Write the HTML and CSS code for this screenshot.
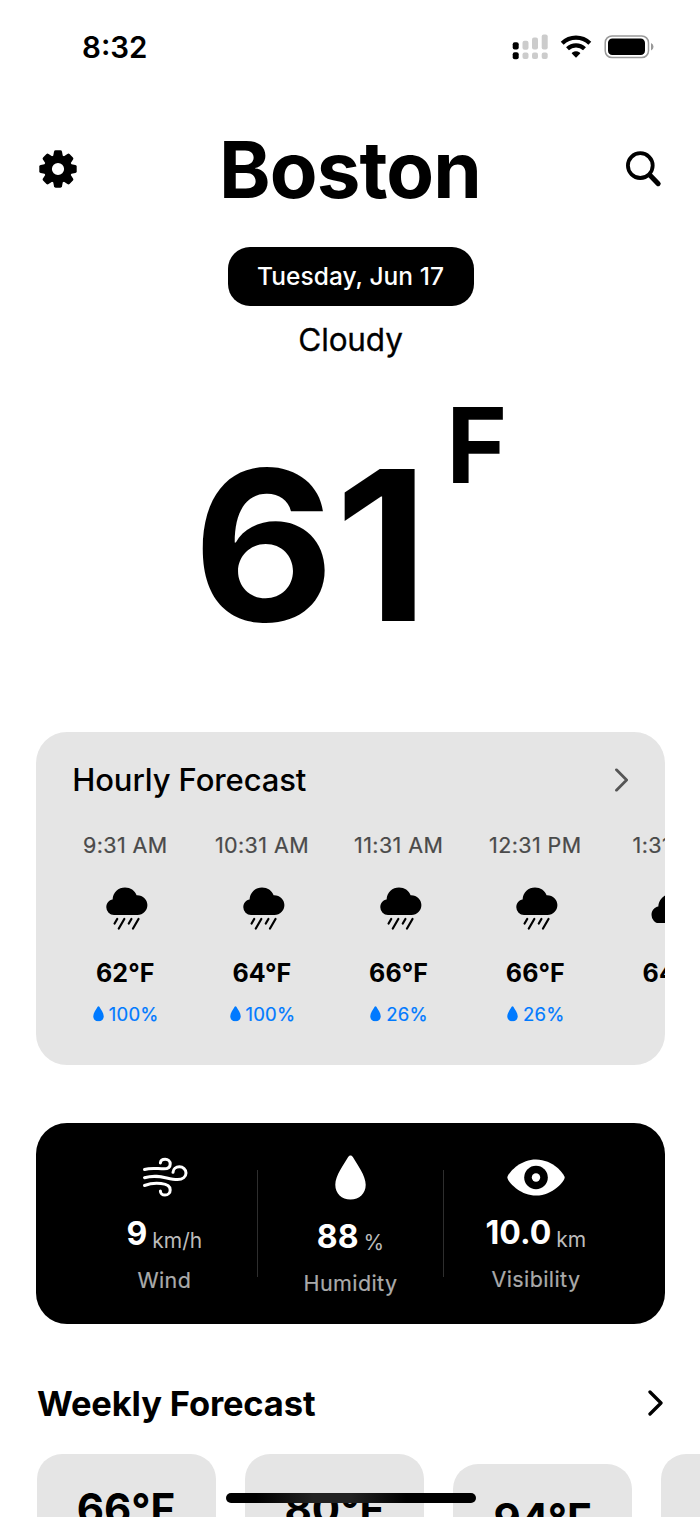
FILE: index.html
```html
<!DOCTYPE html>
<html lang="en">
<head>
<meta charset="utf-8">
<title>Weather</title>
<link rel="stylesheet" href="styles.css">
</head>
<body>
<svg class="defs" aria-hidden="true">
  <symbol id="rain" viewBox="0 0 42 43">
    <path d="M8 28A7.7 7.7 0 0 1 .3 20.300C.3 16 3.200 13 6.600 12.500C7 5.300 12.500.6 19 .6C24.500.6 28.800 3.600 30.600 8.200C36.800 7.900 41.400 12.500 41.400 18.100C41.400 23.700 37 28 31.500 28Z"/>
    <path d="M11.200 32L8.600 36.500M18.300 32L12.800 41.500M25.400 32L22.800 36.500M32.500 32L27 41.500" fill="none" stroke="currentColor" stroke-width="2.200" stroke-linecap="round"/>
  </symbol>
  <symbol id="drop" viewBox="0 0 31 45">
    <path d="M15.500.5C16.500.5 17.300 1 18 2.200C22.500 10 30.700 20.600 30.700 29.700C30.700 38.600 24.300 44.400 15.500 44.400S.3 38.600.3 29.700C.3 20.600 8.500 10 13 2.200C13.700 1 14.500.5 15.500.5Z"/>
  </symbol>
  <symbol id="chevron" viewBox="0 0 16 26">
    <path d="M2 2L13 13L2 24" fill="none" stroke="currentColor" stroke-linecap="round" stroke-linejoin="round"/>
  </symbol>
</svg>
<main class="screen">
  <div class="status">
    <span class="clock">8:32</span>
    <svg class="status-icons" viewBox="0 0 144 26">
      <g fill="#ccc">
        <rect x="12.500" y="6.700" width="6" height="9" rx="2"/><rect x="22" y="3.500" width="6" height="12" rx="2"/><rect x="31.700" y=".5" width="6" height="15" rx="2"/>
        <rect x="12.500" y="18.500" width="6" height="6.500" rx="2"/><rect x="22" y="18.500" width="6" height="6.500" rx="2"/><rect x="31.700" y="18.500" width="6" height="6.500" rx="2"/>
      </g>
      <rect x="2.700" y="8.300" width="6" height="7.200" rx="2"/><rect x="2.700" y="18.300" width="6" height="7" rx="2"/>
      <g fill="none" stroke="#000" stroke-width="4.200">
        <path d="M52.200 9.200A20 20 0 0 1 79.800 9.200"/><path d="M57.500 14.800A12.400 12.400 0 0 1 74.500 14.800"/>
      </g>
      <path d="M66 23.800L61.800 19.600Q61.600 19 62.300 18.500A6.500 6.500 0 0 1 69.700 18.500Q70.400 19 70.200 19.600Z"/>
      <rect x="95.200" y="1.900" width="43.300" height="21.700" rx="6.800" fill="none" stroke="#999" stroke-width="1.500"/>
      <rect x="98" y="4.500" width="37" height="16.500" rx="4.300"/>
      <path d="M141 9Q143.500 10 143.500 12.700T141 16.500Z" fill="#999"/>
    </svg>
  </div>

  <header class="header">
    <svg class="gear" viewBox="-19 -19 38 38">
      <circle r="10.100" fill="none" stroke="#000" stroke-width="8"/>
      <path id="tooth" d="M-5.200 -11L-4 -17.300Q-3.700 -18.700 -2.400 -18.700H2.400Q3.700 -18.700 4 -17.300L5.200 -11Z"/>
      <use href="#tooth" transform="rotate(45)"/><use href="#tooth" transform="rotate(90)"/><use href="#tooth" transform="rotate(135)"/><use href="#tooth" transform="rotate(180)"/><use href="#tooth" transform="rotate(225)"/><use href="#tooth" transform="rotate(270)"/><use href="#tooth" transform="rotate(315)"/>
    </svg>
    <h1 class="city">Boston</h1>
    <svg class="search" viewBox="0 0 38 38" fill="none" stroke="#000">
      <circle cx="15.300" cy="15.600" r="12.400" stroke-width="3.800"/>
      <path d="M25 25.200L33.200 33.700" stroke-width="5" stroke-linecap="round"/>
    </svg>
  </header>

  <div class="date">Tuesday, Jun 17</div>
  <div class="condition">Cloudy</div>
  <div class="now"><span class="degrees">61</span><span class="unit">F</span></div>

  <section class="hourly">
    <div class="hourly-head"><h2 class="hourly-title">Hourly Forecast</h2><svg class="chev-small"><use href="#chevron"/></svg></div>
    <div class="hours">
      <div class="hour"><span class="time">9:31 AM</span><svg class="rain"><use href="#rain"/></svg><b class="temp">62°F</b><span class="chance"><svg class="mini"><use href="#drop"/></svg>100%</span></div>
      <div class="hour"><span class="time">10:31 AM</span><svg class="rain"><use href="#rain"/></svg><b class="temp">64°F</b><span class="chance"><svg class="mini"><use href="#drop"/></svg>100%</span></div>
      <div class="hour"><span class="time">11:31 AM</span><svg class="rain"><use href="#rain"/></svg><b class="temp">66°F</b><span class="chance"><svg class="mini"><use href="#drop"/></svg>26%</span></div>
      <div class="hour"><span class="time">12:31 PM</span><svg class="rain"><use href="#rain"/></svg><b class="temp">66°F</b><span class="chance"><svg class="mini"><use href="#drop"/></svg>26%</span></div>
      <div class="hour"><span class="time">1:31 PM</span><svg class="rain cloud" viewBox="0 0 42 28"><use href="#rain" width="42" height="43"/></svg><b class="temp">64°F</b></div>
    </div>
  </section>

  <section class="metrics">
    <div class="metric wind">
      <svg class="metric-icon" viewBox="0 0 60 46" fill="none" stroke="#fff" stroke-width="3" stroke-linecap="round">
        <path d="M10.500 14.500C17 12.500 23 13.800 30 13.800C34.200 13.800 36.200 11.700 36.200 8.900C36.200 6.300 34 4.200 31.200 4.200C28.400 4.200 26.600 5.800 26.400 7.900"/>
        <path d="M10.500 22.700C25 18.500 33 24.500 43.500 24.500C48.700 24.500 52 21.600 52 17.900C52 14.400 49 11.800 45.400 11.800C41.800 11.800 39.200 14.200 39 17.300"/>
        <path d="M10.500 30.500C16 28.500 22 28 27 28.600C33 29.200 36.200 31.500 36.200 34.900C36.200 37.800 34 40 31 40C28.200 40 26.400 38.200 26.400 35.900"/>
      </svg>
      <div class="reading"><b>9</b><span>km/h</span></div><span class="label">Wind</span>
    </div>
    <div class="metric humidity">
      <svg class="metric-icon" viewBox="0 0 31 45" fill="#fff"><use href="#drop"/></svg>
      <div class="reading"><b>88</b><span>%</span></div><span class="label">Humidity</span>
    </div>
    <div class="metric visibility">
      <svg class="metric-icon" viewBox="0 0 58 37"><path d="M.3 18.500C.3 15.200 12 .4 29 .4S57.700 15.200 57.700 18.500S46 36.600 29 36.600S.3 21.800.3 18.500Z" fill="#fff"/><circle cx="29" cy="18.500" r="11.800"/><circle cx="29" cy="18.500" r="4.200" fill="#fff"/></svg>
      <div class="reading"><b>10.0</b><span>km</span></div><span class="label">Visibility</span>
    </div>
  </section>

  <div class="weekly-head"><h2 class="weekly-title">Weekly Forecast</h2><svg class="chev-large"><use href="#chevron"/></svg></div>
  <div class="days">
    <div class="day">66°F</div><div class="day">80°F</div><div class="day lower">94°F</div><div class="day"></div>
  </div>
  <div class="home-bar"></div>
</main>
</body>
</html>
```
FILE: styles.css
```css
* { box-sizing: border-box; }
body { margin: 0; background: #fff; color: #000; font-family: Inter, "Liberation Sans", sans-serif; }
h1, h2 { margin: 0; }
svg { display: block; flex: none; overflow: visible; }
.defs { position: absolute; width: 0; height: 0; }
.screen { position: relative; width: 700px; height: 1517px; padding-left: 1px; overflow: hidden; display: flex; flex-direction: column; align-items: center; }
.screen > * { flex: none; }

.status { width: 100%; height: 94px; padding: 0 46px 0 81px; display: flex; align-items: center; justify-content: space-between; }
.clock { font-size: 29.5px; font-weight: 600; line-height: 40px; letter-spacing: 0; }
.status-icons { width: 144px; height: 26px; }

.header { width: 100%; height: 150px; padding: 0 37px 0 38px; display: flex; align-items: center; justify-content: space-between; }
.gear { width: 38px; height: 38px; }
.city { margin: 1px 0 0 -2px; font-size: 78px; font-weight: 700; line-height: 90px; letter-spacing: -0.9px; }
.search { width: 38px; height: 38px; }

.date { width: 246px; height: 59px; margin-top: 2.500px; border-radius: 22px; background: #000; color: #fff; font-size: 24.5px; font-weight: 500; line-height: 59px; text-align: center; letter-spacing: 0.05px; }
.condition { margin-top: 14px; font-size: 31.5px; line-height: 40px; letter-spacing: -0.15px; -webkit-text-stroke: 0.3px #000; }
.now { height: 372px; padding: 35.500px 0 0 9.500px; display: flex; align-items: flex-start; }
.degrees { margin-top: 50px; font-size: 209px; font-weight: 700; line-height: 200px; transform: scaleX(1.045); transform-origin: 100% 50%; }
.unit { margin-left: 17px; font-size: 104px; font-weight: 700; line-height: 100px; }

.hourly { width: 628.5px; height: 333px; margin-top: 0; padding: 24px 0 0 36px; border-radius: 31px; background: #e5e5e5; overflow: hidden; }
.hourly-head { height: 48px; padding-right: 35px; display: flex; align-items: center; justify-content: space-between; }
.hourly-title { font-size: 31px; font-weight: 500; letter-spacing: -0.1px; }
.chev-small { width: 16px; height: 24px; color: #555; stroke-width: 3; }
.hours { display: flex; gap: 30.700px; margin-top: 24px; }
.hour { flex: 0 0 106px; display: flex; flex-direction: column; align-items: center; }
.time { color: #4a4a4a; font-size: 21.5px; line-height: 34px; white-space: nowrap; letter-spacing: 0.4px; -webkit-text-stroke: 0.2px #4a4a4a; }
.rain { width: 42px; height: 43px; margin: 25.500px 0 22px 4px; }
.cloud { width: 46px; height: 30.500px; margin: 31px 0 29px 4px; overflow: hidden; }
.temp { font-size: 25px; line-height: 42px; white-space: nowrap; letter-spacing: 0.1px; }
.chance { display: flex; align-items: center; gap: 5px; color: #007aff; font-size: 18.5px; line-height: 40px; padding-left: 1px; letter-spacing: 0.2px; -webkit-text-stroke: 0.2px #007aff; }
.mini { width: 11px; height: 15.5px; fill: currentColor; }

.metrics { width: 628.5px; height: 201.5px; margin-top: 58px; padding: 32px 35px 0; border-radius: 31px; background: #000; color: #fff; display: grid; grid-template-columns: repeat(3, 1fr); }
.metric { display: flex; flex-direction: column; align-items: center; height: 142px; }
.humidity { position: relative; }
.humidity::before, .humidity::after { content: ""; position: absolute; top: 15px; height: 107px; width: 1px; background: #2e2e2e; }
.humidity::before { left: 0; }
.humidity::after { right: 0; }
.wind .metric-icon { width: 60px; height: 46px; }
.humidity .metric-icon { width: 31px; height: 45px; }
.visibility { padding-right: 1.500px; }
.visibility .metric-icon { width: 58px; height: 37px; margin-top: 4px; }
.reading { height: 40px; display: flex; align-items: center; gap: 5px; }
.reading b { font-size: 32px; }
.reading span { color: #bbb; font-size: 21px; margin-top: 13px; }
.label { color: #aaa; font-size: 21.5px; line-height: 30px; letter-spacing: 0.4px; -webkit-text-stroke: 0.2px #aaa; }
.wind .reading { margin-top: 13px; }
.wind .label { margin-top: 11px; }
.humidity .reading { margin-top: 17px; }
.humidity .label { margin-top: 12px; }
.visibility .reading { margin-top: 17px; }
.visibility .label { margin-top: 11px; }

.weekly-head { width: 627px; height: 50px; margin-top: 54px; display: flex; align-items: center; justify-content: space-between; }
.weekly-title { font-size: 34.5px; font-weight: 700; letter-spacing: -0.15px; }
.chev-large { width: 16px; height: 26px; stroke-width: 3.300; }
.days { align-self: flex-start; width: 699px; margin-top: 26px; padding-left: 35.5px; display: flex; gap: 29.300px; }
.day { flex: 0 0 179px; height: 200px; padding-top: 30px; border-radius: 25px; background: #e5e5e5; text-align: center; font-size: 42px; font-weight: 700; line-height: 50px; }
.lower { margin-top: 10px; }
.home-bar { position: absolute; left: 226px; top: 1493px; width: 250px; height: 9.500px; border-radius: 5px; background: linear-gradient(90deg, #000 12%, #222 35%, #222 50%, #000 72%); }
```
